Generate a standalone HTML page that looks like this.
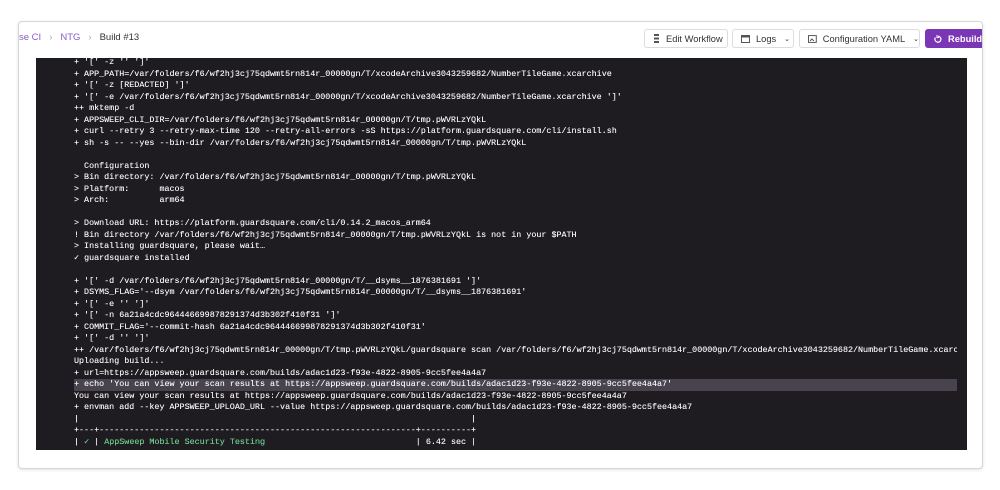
<!DOCTYPE html>
<html><head><meta charset="utf-8"><style>
*{margin:0;padding:0;box-sizing:border-box}
html,body{width:1000px;height:490px;background:#fff;overflow:hidden;font-family:"Liberation Sans",sans-serif}
.card{position:absolute;left:18px;top:21px;width:965px;height:448px;border:1px solid #d6d6d6;border-radius:4px;box-shadow:0 1px 3px rgba(0,0,0,.12);overflow:hidden;background:#fff}
.crumb{position:absolute;left:0;top:10px;font-size:9.5px;color:#333;white-space:nowrap}
.crumb .l{color:#8a5cc8}
.crumb .s{color:#aaa;margin:0 8px}
.btn{position:absolute;top:7px;height:19px;border:1px solid #dcdcdc;border-radius:3px;font-size:9.3px;color:#333;display:flex;align-items:center;padding-left:8px;background:#fff;white-space:nowrap}
.btn svg{margin-right:6px}
.rb{background:#7b36b5;border-color:#7b36b5;color:#fff;font-weight:bold}
.term{position:absolute;left:17px;top:36px;width:931px;height:392px;background:#1f1c21;overflow:hidden;padding:0 9px 0 0}
pre{position:absolute;left:38px;top:-1px;font-family:"Liberation Mono","DejaVu Sans Mono",monospace;font-size:8.4px;line-height:11.5px;color:#f2f2f2;white-space:pre;width:883px;overflow:hidden;text-shadow:0 0 .3px #fff}
.hl{background:#48434f;display:block}
.g{color:#52c478}
</style></head><body>
<div class="card">
<div class="crumb"><span class="l">se CI</span><span class="s">›</span><span class="l">NTG</span><span class="s">›</span>Build #13</div>
<div class="btn" style="left:625px;width:84px"><svg width="7" height="9" viewBox="0 0 7 9"><rect x="1" y="0" width="5" height="2" fill="#555"/><rect x="1" y="3.5" width="5" height="2" fill="#555"/><rect x="1" y="7" width="5" height="2" fill="#555"/></svg>Edit Workflow</div>
<div class="btn" style="left:713px;width:62px"><svg width="9" height="8" viewBox="0 0 9 8"><rect x=".5" y=".5" width="8" height="7" fill="none" stroke="#555"/><rect x=".5" y=".5" width="8" height="2" fill="#555"/></svg>Logs<span style="margin-left:8px;font-size:7px">⌄</span></div>
<div class="btn" style="left:780px;width:121px"><svg width="9" height="8" viewBox="0 0 9 8"><rect x=".5" y=".5" width="8" height="7" fill="none" stroke="#555"/><path d="M2 6l2-2 2 2" stroke="#555" fill="none"/></svg>Configuration YAML<span style="margin-left:8px;font-size:7px">⌄</span></div>
<div class="btn rb" style="left:906px;width:62px"><svg width="8" height="8" viewBox="0 0 8 8"><path d="M4 1.2A3 3 0 1 1 1.4 2.6" stroke="#fff" stroke-width="1.2" fill="none"/><path d="M3 0v2.5h2" stroke="#fff" fill="none"/></svg>Rebuild</div>
<div class="term"><pre>+ '[' -z '' ']'
+ APP_PATH=/var/folders/f6/wf2hj3cj75qdwmt5rn814r_00000gn/T/xcodeArchive3043259682/NumberTileGame.xcarchive
+ '[' -z [REDACTED] ']'
+ '[' -e /var/folders/f6/wf2hj3cj75qdwmt5rn814r_00000gn/T/xcodeArchive3043259682/NumberTileGame.xcarchive ']'
++ mktemp -d
+ APPSWEEP_CLI_DIR=/var/folders/f6/wf2hj3cj75qdwmt5rn814r_00000gn/T/tmp.pWVRLzYQkL
+ curl --retry 3 --retry-max-time 120 --retry-all-errors -sS https://platform.guardsquare.com/cli/install.sh
+ sh -s -- --yes --bin-dir /var/folders/f6/wf2hj3cj75qdwmt5rn814r_00000gn/T/tmp.pWVRLzYQkL

  Configuration
&gt; Bin directory: /var/folders/f6/wf2hj3cj75qdwmt5rn814r_00000gn/T/tmp.pWVRLzYQkL
&gt; Platform:      macos
&gt; Arch:          arm64

&gt; Download URL: https://platform.guardsquare.com/cli/0.14.2_macos_arm64
! Bin directory /var/folders/f6/wf2hj3cj75qdwmt5rn814r_00000gn/T/tmp.pWVRLzYQkL is not in your $PATH
&gt; Installing guardsquare, please wait…
✓ guardsquare installed

+ '[' -d /var/folders/f6/wf2hj3cj75qdwmt5rn814r_00000gn/T/__dsyms__1876381691 ']'
+ DSYMS_FLAG='--dsym /var/folders/f6/wf2hj3cj75qdwmt5rn814r_00000gn/T/__dsyms__1876381691'
+ '[' -e '' ']'
+ '[' -n 6a21a4cdc964446699878291374d3b302f410f31 ']'
+ COMMIT_FLAG='--commit-hash 6a21a4cdc964446699878291374d3b302f410f31'
+ '[' -d '' ']'
++ /var/folders/f6/wf2hj3cj75qdwmt5rn814r_00000gn/T/tmp.pWVRLzYQkL/guardsquare scan /var/folders/f6/wf2hj3cj75qdwmt5rn814r_00000gn/T/xcodeArchive3043259682/NumberTileGame.xcarchive
Uploading build...
+ url=https://appsweep.guardsquare.com/builds/adac1d23-f93e-4822-8905-9cc5fee4a4a7
<span class="hl">+ echo 'You can view your scan results at https://appsweep.guardsquare.com/builds/adac1d23-f93e-4822-8905-9cc5fee4a4a7'</span>You can view your scan results at https://appsweep.guardsquare.com/builds/adac1d23-f93e-4822-8905-9cc5fee4a4a7
+ envman add --key APPSWEEP_UPLOAD_URL --value https://appsweep.guardsquare.com/builds/adac1d23-f93e-4822-8905-9cc5fee4a4a7
|                                                                              |
+---+---------------------------------------------------------------+----------+
| <span class="g">✓</span> | <span class="g">AppSweep Mobile Security Testing</span>                              | 6.42 sec |</pre></div>
</div>
</body></html>
